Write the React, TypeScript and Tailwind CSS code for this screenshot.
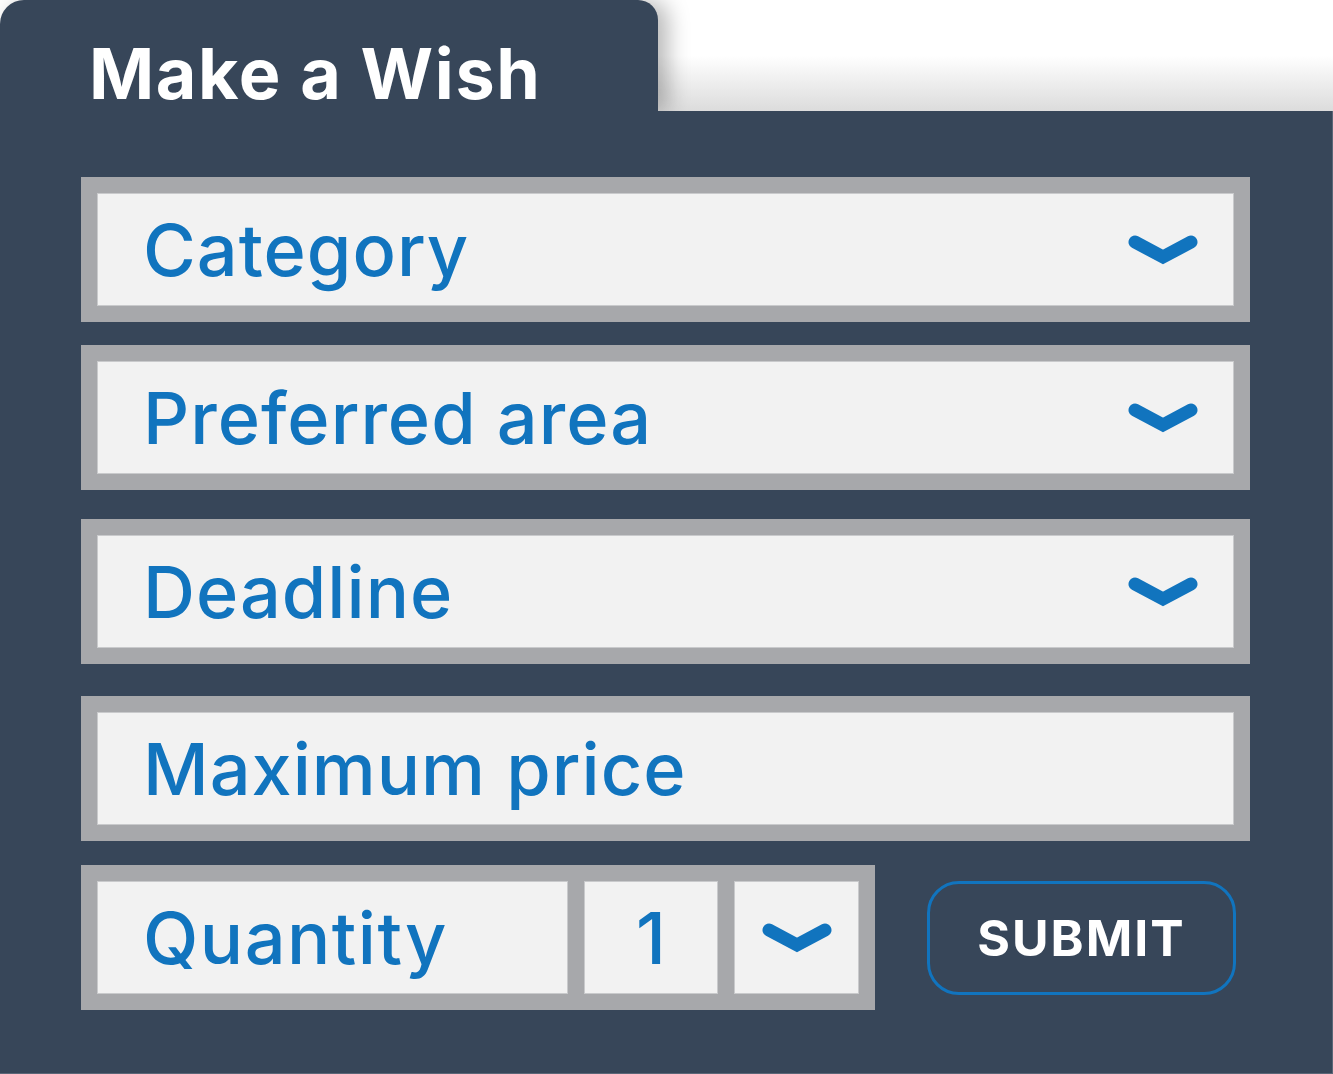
import type { ReactNode } from "react";

const font = { fontFamily: '"Inter", "Liberation Sans", sans-serif' };

function Chevron({ w = 70, h = 30 }: { w?: number; h?: number }) {
  return (
    <svg width={w} height={h} viewBox="0 0 70 30" fill="none">
      <path
        d="M7 7 L35 22 L63 7"
        stroke="#1174be"
        strokeWidth="13"
        strokeLinecap="round"
        strokeLinejoin="miter"
      />
    </svg>
  );
}

function Field({ label, arrow = true, className = "" }: { label: string; arrow?: boolean; className?: string }) {
  return (
    <div className={`w-[1169px] h-[145px] bg-[#a7a8ab] p-4 ${className}`}>
      <div className="h-full bg-[#f2f2f2] border border-[#c9cacc] flex items-center justify-between pl-[45px] pr-[35px]">
        <span className="text-[#1174be] text-[72px] font-medium tracking-[1px] leading-none" style={font}>
          {label}
        </span>
        {arrow && <Chevron />}
      </div>
    </div>
  );
}

function Cell({ children, className = "" }: { children: ReactNode; className?: string }) {
  return (
    <div className={`h-full bg-[#f2f2f2] border border-[#c9cacc] flex items-center ${className}`}>{children}</div>
  );
}

export default function App() {
  return (
    <div className="w-[1333px] h-[1074px] bg-white flex flex-col overflow-hidden" style={font}>
      <div className="relative h-[111px] bg-gradient-to-b from-white via-white to-[#dcdcdc]">
        <div className="relative z-10 w-[658px] h-[111px] bg-[#374659] rounded-tl-[24px] rounded-tr-[20px] shadow-[10px_0_22px_rgba(0,0,0,0.28)] pl-[89px] pt-[39px]">
          <h1 className="text-white text-[70px] font-bold leading-none tracking-[1.6px]">Make a Wish</h1>
        </div>
      </div>
      <div className="relative z-20 flex-1 bg-[#374659] pl-[81px] pt-[66px] border-r border-b border-[#5a6677]">
        <Field label="Category" />
        <Field label="Preferred area" className="mt-[23px]" />
        <Field label="Deadline" className="mt-[29px]" />
        <Field label="Maximum price" arrow={false} className="mt-[32px]" />
        <div className="mt-[24px] flex items-center">
          <div className="w-[794px] h-[145px] bg-[#a7a8ab] p-4 flex gap-4">
            <Cell className="w-[471px] pl-[45px]">
              <span className="text-[#1174be] text-[72px] font-medium tracking-[1.5px] leading-none">Quantity</span>
            </Cell>
            <Cell className="w-[134px] justify-center">
              <span className="text-[#1174be] text-[72px] font-medium leading-none">1</span>
            </Cell>
            <Cell className="w-[125px] justify-center">
              <Chevron w={70} h={30} />
            </Cell>
          </div>
          <button className="ml-[52px] w-[309px] h-[114px] rounded-[32px] border-[3px] border-[#1174be] text-white text-[50px] font-bold tracking-[2px] leading-none">
            SUBMIT
          </button>
        </div>
      </div>
    </div>
  );
}
